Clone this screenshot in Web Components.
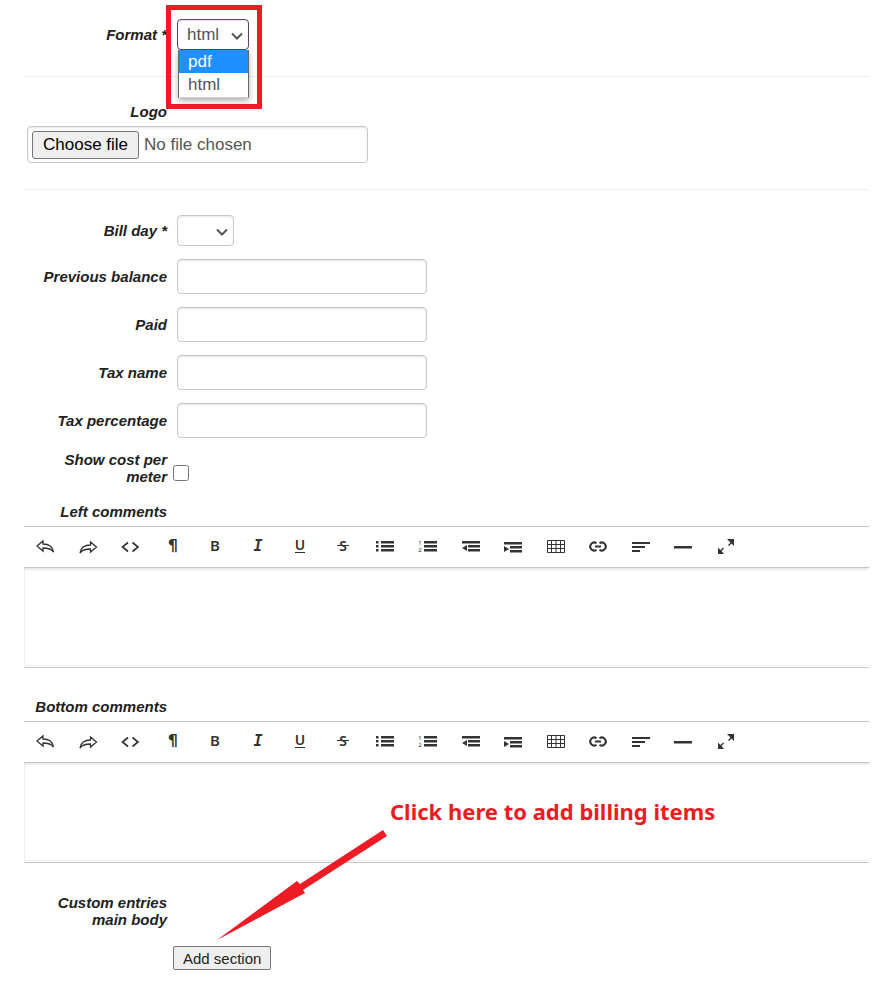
<!DOCTYPE html>
<html lang="en">
<head>
<meta charset="utf-8">
<meta name="viewport" content="width=device-width, initial-scale=1">
<title>Bill template</title>
<style>
  body {
    margin: 0;
    background: #fff;
    color: #222;
    font-family: "Liberation Sans", Arial, sans-serif;
    font-size: 15px;
  }
</style>
</head>
<body>
<bill-form>
  <select-field slot="format" label="Format *" value="html" options="pdf,html" open></select-field>
  <file-field slot="logo" label="Logo"></file-field>
  <select-field label="Bill day *"></select-field>
  <text-field label="Previous balance"></text-field>
  <text-field label="Paid"></text-field>
  <text-field label="Tax name"></text-field>
  <text-field label="Tax percentage"></text-field>
  <check-field label="Show cost per meter"></check-field>
  <comment-editor slot="comments" label="Left comments"></comment-editor>
  <comment-editor slot="comments" label="Bottom comments"></comment-editor>
  <section-adder slot="entries" label="Custom entries main body">
    <click-hint>Click here to add billing items</click-hint>
  </section-adder>
</bill-form>

<script>
const fieldStyles = `
  :host { display: block; }
  * { box-sizing: border-box; }
  .row {
    display: grid;
    grid-template-columns: 143px minmax(0, 1fr);
    column-gap: 10px;
    align-items: center;
  }
  .label {
    font-weight: bold;
    font-style: italic;
    font-size: 15px;
    line-height: 17px;
    text-align: right;
  }
  .control {
    border: 1px solid #c8c8c8;
    border-radius: 4px;
    background: #fff;
    box-shadow: inset 0 1px 2px rgba(0, 0, 0, 0.1);
    color: #555;
    font-family: inherit;
    font-size: 17px;
  }
`;

class BillForm extends HTMLElement {
  constructor() {
    super();
    this.attachShadow({ mode: 'open' }).innerHTML = `
      <style>
        :host { display: block; padding: 19px 13px 19px 24px; }
        form { margin: 0; }
        hr { border: 0; border-top: 1px solid #eee; margin: 26px 0 25px; }
        .fields { display: flex; flex-direction: column; gap: 13px; margin-bottom: 18px; }
        .comments { display: flex; flex-direction: column; gap: 30px; margin-bottom: 31px; }
      </style>
      <form>
        <slot name="format"></slot>
        <hr>
        <slot name="logo"></slot>
        <hr>
        <div class="fields"><slot></slot></div>
        <div class="comments"><slot name="comments"></slot></div>
        <slot name="entries"></slot>
      </form>
    `;
  }
}

class TextField extends HTMLElement {
  connectedCallback() {
    this.attachShadow({ mode: 'open' }).innerHTML = `
      <style>
        ${fieldStyles}
        input { width: 250px; max-width: 100%; height: 35px; padding: 4px 8px; }
      </style>
      <div class="row">
        <label class="label" for="field">${this.getAttribute('label')}</label>
        <input class="control" id="field" type="text">
      </div>
    `;
  }
}

class SelectField extends HTMLElement {
  connectedCallback() {
    const value = this.getAttribute('value') || '';
    const options = (this.getAttribute('options') || '').split(',');
    const open = this.hasAttribute('open');

    this.attachShadow({ mode: 'open' }).innerHTML = `
      <style>
        ${fieldStyles}
        .box { position: relative; justify-self: start; }
        select {
          display: block;
          appearance: none;
          min-width: 57px;
          height: 31px;
          padding: 0 28px 0 9px;
        }
        .chevron {
          position: absolute;
          right: 6px;
          top: 11px;
          width: 12px;
          height: 12px;
          pointer-events: none;
        }
        :host([open]) select { border-color: #5b4468; outline: none; }
        .menu {
          position: absolute;
          top: 31px;
          left: 1px;
          right: 0;
          margin: 0;
          padding: 0 0 1px;
          list-style: none;
          border: 1px solid #666;
          border-top: 0;
          border-bottom-color: #ccc;
          background: #fff;
          box-shadow: 0 3px 6px rgba(0, 0, 0, 0.3);
          color: #555;
          font-size: 17px;
          line-height: 23px;
        }
        .menu li { padding-left: 9px; }
        .menu .active { background: #1e90ff; color: #fff; }
        .frame {
          position: absolute;
          inset: -14px -13px -59px -11px;
          border: 5px solid #ed1c24;
          pointer-events: none;
        }
      </style>
      <div class="row">
        <label class="label" for="field">${this.getAttribute('label')}</label>
        <div class="box">
          <select class="control" id="field">
            ${options.map((o) => `<option${o === value ? ' selected' : ''}>${o}</option>`).join('')}
          </select>
          <svg class="chevron" viewBox="0 0 12 12" fill="none" stroke="#555" stroke-width="2"><path d="M1 3.5l5 5 5-5"/></svg>
          ${open ? `
            <ul class="menu" role="listbox">
              ${options.map((o, i) => `<li role="option" class="${i === 0 ? 'active' : ''}">${o}</li>`).join('')}
            </ul>
            <div class="frame"></div>
          ` : ''}
        </div>
      </div>
    `;
  }
}

class FileField extends HTMLElement {
  connectedCallback() {
    this.attachShadow({ mode: 'open' }).innerHTML = `
      <style>
        ${fieldStyles}
        :host { padding-top: 1px; }
        .box {
          position: relative;
          display: flex;
          align-items: center;
          gap: 5px;
          width: 341px;
          max-width: 100%;
          height: 37px;
          margin: 6px 0 0 3px;
          padding: 0 4px;
        }
        .choose {
          border: 1px solid #767676;
          border-radius: 3px;
          background: #efefef;
          color: #000;
          padding: 0 10px;
          line-height: 26px;
        }
        input {
          position: absolute;
          inset: 0;
          width: 100%;
          opacity: 0;
        }
      </style>
      <div class="row"><label class="label" for="field">${this.getAttribute('label')}</label></div>
      <div class="box control">
        <span class="choose">Choose file</span>
        <span class="name">No file chosen</span>
        <input id="field" type="file">
      </div>
    `;
    const input = this.shadowRoot.querySelector('input');
    input.addEventListener('change', () => {
      this.shadowRoot.querySelector('.name').textContent = input.files.length ? input.files[0].name : 'No file chosen';
    });
  }
}

class CheckField extends HTMLElement {
  connectedCallback() {
    this.attachShadow({ mode: 'open' }).innerHTML = `
      <style>
        ${fieldStyles}
        .row { column-gap: 6px; align-items: end; }
        input { width: 16px; height: 16px; margin: 0 0 4px; }
      </style>
      <div class="row">
        <label class="label" for="field">${this.getAttribute('label')}</label>
        <input id="field" type="checkbox">
      </div>
    `;
  }
}

// All icons share a 20x20 box
const icons = {
  Undo: '<path class="line" d="M2 9l6-5v3c5 0 9.500 2 10.500 8-2.500-3.500-5.500-4-10.500-4v3z"/>',
  Redo: '<path class="line" d="M18.500 10l-6-5v3c-5 0-9.500 2-10.500 8 2.500-3.500 5.500-4 10.500-4v3z"/>',
  Code: '<path class="line bold" d="M8 5.500l-5.500 4.500 5.500 4.500M12.500 5.500l5.500 4.500-5.500 4.500"/>',
  Paragraph: '<text x="10" y="14" font-size="16" font-family="DejaVu Sans Mono" font-weight="bold">¶</text>',
  Bold: '<text x="10" y="14" font-size="15" font-weight="600">B</text>',
  Italic: '<text x="10" y="14" font-size="15" font-family="DejaVu Sans Mono" font-weight="bold" font-style="italic">I</text>',
  Underline: '<text x="10" y="13" font-size="14" font-weight="600">U</text><path d="M5 15h10v1H5z"/>',
  Strikethrough: '<text x="10" y="14" font-size="14" font-weight="600">S</text><path d="M4 8h12v1H4z"/>',
  'Bulleted list': '<path d="M1 4h2.500v2.500H1zM1 8h2.500v2.500H1zM1 12h2.500v2.500H1zM6 4h13v2.500H6zM6 8h13v2.500H6zM6 12h13v2.500H6z"/>',
  'Numbered list': '<text x="2" y="8" font-size="6">1</text><text x="2" y="15" font-size="6">2</text><path d="M6 4h13v2.500H6zM6 8h13v2.500H6zM6 12h13v2.500H6z"/>',
  Outdent: '<path d="M1 4h18v2.500H1zM7 8h12v2.500H7zM7 12h12v2.500H7zM6 8v6l-5-3z"/>',
  Indent: '<path d="M1 5h18v2.500H1zM7 9h12v2.500H7zM7 13h12v2.500H7zM1 9v6l5-3z"/>',
  Table: '<path class="line thin" d="M1.500 3.500h17v12h-17zM1.500 7.500h17M1.500 11.500h17M5.500 3.500v12M10 3.500v12M14.500 3.500v12"/>',
  Link: '<path class="line heavy" d="M8.500 6.200A4 4 0 1 0 8.500 12.800M11.500 6.200A4 4 0 1 1 11.500 12.800M7 9.500h6"/>',
  Align: '<path d="M1 5h18v2H1zM1 9h13v2H1zM1 13h8v2H1z"/>',
  'Horizontal rule': '<path d="M1 9h18v2.500H1z"/>',
  Fullscreen: '<path d="M11 2h7v7l-2.500-2.500-2.500 2.500-1-1 2.500-2.500zM2 10.500l2.500 2.500 2.500-2.500 1 1-2.500 2.500 2.500 3H2z"/>'
};

class CommentEditor extends HTMLElement {
  connectedCallback() {
    this.attachShadow({ mode: 'open' }).innerHTML = `
      <style>
        ${fieldStyles}
        .editor {
          margin-top: 6px;
          border: solid #c4c4c4;
          border-width: 1px 0;
        }
        .toolbar {
          position: relative;
          border-bottom: 1px solid #c4c4c4;
          box-shadow: 0 1px 3px rgba(0, 0, 0, 0.15);
          clip-path: inset(0 0 -4px);
        }
        .tools {
          display: grid;
          grid-template-columns: repeat(17, minmax(0, 1fr));
          max-width: 723px;
        }
        button {
          display: flex;
          align-items: center;
          justify-content: center;
          height: 40px;
          border: 0;
          padding: 0;
          background: none;
        }
        button:hover { background: #f4f4f4; }
        svg {
          width: 20px;
          height: 20px;
          overflow: visible;
          fill: #333;
          font-family: "Noto Sans", sans-serif;
          text-anchor: middle;
          flex: none;
        }
        .line { fill: none; stroke: #333; stroke-width: 1.3; }
        .thin { stroke-width: 1; }
        .bold { stroke-width: 1.7; }
        .heavy { stroke-width: 2; }
        textarea {
          display: block;
          width: 100%;
          height: 98px;
          margin-bottom: 1px;
          border: solid #eee;
          border-width: 0 0 1px 1px;
          padding: 10px;
          resize: none;
          outline: none;
          font: inherit;
        }
      </style>
      <div class="row"><label class="label" for="field">${this.getAttribute('label')}</label></div>
      <div class="editor">
        <div class="toolbar">
          <div class="tools" role="toolbar">
            ${Object.entries(icons).map(([name, shape]) => `<button type="button" aria-label="${name}"><svg viewBox="0 0 20 20">${shape}</svg></button>`).join('')}
          </div>
        </div>
        <textarea id="field"></textarea>
      </div>
    `;
  }
}

class SectionAdder extends HTMLElement {
  connectedCallback() {
    this.attachShadow({ mode: 'open' }).innerHTML = `
      <style>
        ${fieldStyles}
        :host { position: relative; }
        button {
          display: block;
          margin: 18px 0 0 149px;
          height: 24px;
          padding: 0 9px;
          border: 1px solid #767676;
          border-radius: 2px;
          background: #efefef;
          color: #222;
          font-family: inherit;
          font-size: 15px;
        }
        ::slotted(click-hint) { position: absolute; left: 193px; bottom: 30px; }
      </style>
      <div class="row"><label class="label" for="add">${this.getAttribute('label')}</label></div>
      <button id="add" type="button" aria-label="Add section">Add section</button>
      <slot></slot>
    `;
  }
}

class ClickHint extends HTMLElement {
  constructor() {
    super();
    this.attachShadow({ mode: 'open' }).innerHTML = `
      <style>
        :host {
          display: block;
          pointer-events: none;
          color: #ed1c24;
          font-family: "Noto Sans", sans-serif;
          font-size: 22px;
          font-weight: bold;
          line-height: 30px;
          white-space: nowrap;
        }
        .text { display: block; padding-left: 173px; }
        svg { display: block; margin-top: 4px; width: 170px; height: 110px; }
      </style>
      <span class="text"><slot></slot></span>
      <svg viewBox="0 0 170 110" fill="#ed1c24"><path d="M0 110L80 51l3 3 83-54 4 6-84 54 2 3z"/></svg>
    `;
  }
}

customElements.define('bill-form', BillForm);
customElements.define('text-field', TextField);
customElements.define('select-field', SelectField);
customElements.define('file-field', FileField);
customElements.define('check-field', CheckField);
customElements.define('comment-editor', CommentEditor);
customElements.define('section-adder', SectionAdder);
customElements.define('click-hint', ClickHint);
</script>
</body>
</html>
